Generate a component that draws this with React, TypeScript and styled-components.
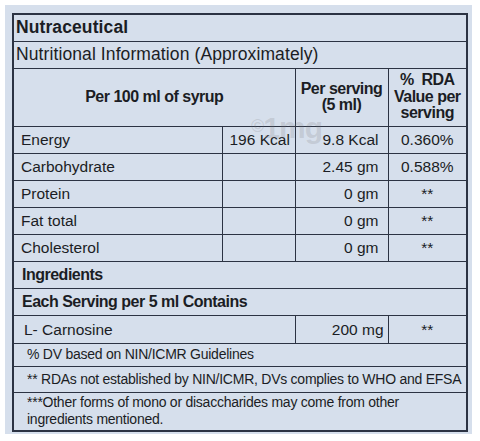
import styled, { createGlobalStyle } from "styled-components";

const GlobalStyle = createGlobalStyle`
    html, body {
        margin: 0;
        padding: 0;
        background: #ffffff;
    }
    body {
        font-family: "Liberation Sans", Arial, sans-serif;
        color: #1b1d24;
    }
`;

const nutrients = [
    { name: "Energy", per100: "196 Kcal", serving: "9.8 Kcal", rda: "0.360%" },
    { name: "Carbohydrate", per100: "", serving: "2.45 gm", rda: "0.588%" },
    { name: "Protein", per100: "", serving: "0 gm", rda: "**" },
    { name: "Fat total", per100: "", serving: "0 gm", rda: "**" },
    { name: "Cholesterol", per100: "", serving: "0 gm", rda: "**" },
];

export default function App() {
    return (
        <Page>
            <GlobalStyle />
            <Panel>
                <Table>
                    <colgroup>
                        <col style={{ width: 209 }} />
                        <col style={{ width: 73 }} />
                        <col style={{ width: 93 }} />
                        <col style={{ width: 79 }} />
                    </colgroup>
                    <tbody>
                        <Row h={27}>
                            <TitleCell colSpan={4} bold>
                                Nutraceutical
                            </TitleCell>
                        </Row>
                        <Row h={27}>
                            <TitleCell colSpan={4}>Nutritional Information (Approximately)</TitleCell>
                        </Row>
                        <Row h={58}>
                            <HeadCell colSpan={2}>Per 100 ml of syrup</HeadCell>
                            <HeadCell>
                                Per serving
                                <br />
                                (5 ml)
                            </HeadCell>
                            <HeadCell>
                                %&nbsp; RDA
                                <br />
                                Value per
                                <br />
                                serving
                            </HeadCell>
                        </Row>
                        {nutrients.map((n) => (
                            <Row h={27} key={n.name}>
                                <Cell pad={7}>{n.name}</Cell>
                                <Cell align="right" pad={7}>
                                    {n.per100}
                                </Cell>
                                <Cell align="right" pad={9}>
                                    {n.serving}
                                </Cell>
                                <Cell align="center">{n.rda}</Cell>
                            </Row>
                        ))}
                        <Row h={27}>
                            <BoldCell colSpan={4}>Ingredients</BoldCell>
                        </Row>
                        <Row h={27}>
                            <BoldCell colSpan={4}>Each Serving per 5 ml Contains</BoldCell>
                        </Row>
                        <Row h={28}>
                            <Cell colSpan={2} pad={10}>
                                L- Carnosine
                            </Cell>
                            <Cell align="right" pad={4}>
                                200 mg
                            </Cell>
                            <Cell align="center">**</Cell>
                        </Row>
                        <Row h={23}>
                            <NoteCell colSpan={4}>% DV based on NIN/ICMR Guidelines</NoteCell>
                        </Row>
                        <Row h={26}>
                            <NoteCell colSpan={4}>
                                ** RDAs not established by NIN/ICMR, DVs complies to WHO and EFSA
                            </NoteCell>
                        </Row>
                        <Row h={39}>
                            <NoteCell colSpan={4}>
                                ***Other forms of mono or disaccharides may come from other
                                <br />
                                ingredients mentioned.
                            </NoteCell>
                        </Row>
                    </tbody>
                </Table>
                <Watermark>
                    <small>©</small>1mg
                </Watermark>
            </Panel>
        </Page>
    );
}

const Page = styled.div`
    width: 480px;
    height: 441px;
    padding: 5px 0 0 5px;
    box-sizing: border-box;
`;

const Panel = styled.div`
    position: relative;
    width: 467px;
    height: 429px;
    padding: 8px 0 0 7px;
    box-sizing: border-box;
    background: #d6dfec;
`;

const Table = styled.table`
    width: 454px;
    table-layout: fixed;
    border-collapse: collapse;
    border: 2px solid #2c3343;
    font-size: 15px;
    line-height: 17px;
`;

const Row = styled.tr<{ h: number }>`
    height: ${({ h }) => h}px;
`;

const Cell = styled.td<{ align?: string; pad?: number }>`
    border: 1px solid #2c3343;
    padding: 0 ${({ pad }) => pad ?? 0}px;
    text-align: ${({ align }) => align ?? "left"};
    vertical-align: middle;
    white-space: nowrap;
    overflow: hidden;
    font-size: 15.5px;
`;

const TitleCell = styled.td<{ bold?: boolean }>`
    border: 1px solid #2c3343;
    padding: 0 2px;
    vertical-align: middle;
    white-space: nowrap;
    font-size: 17.5px;
    font-weight: ${({ bold }) => (bold ? 700 : 400)};
    letter-spacing: 0.1px;
`;

const HeadCell = styled.td`
    border: 1px solid #2c3343;
    padding: 0;
    text-align: center;
    vertical-align: middle;
    white-space: nowrap;
    font-weight: 700;
    font-size: 16px;
    line-height: 16.5px;
    letter-spacing: -0.5px;
`;

const BoldCell = styled.td`
    border: 1px solid #2c3343;
    padding: 0 8px;
    vertical-align: middle;
    white-space: nowrap;
    font-weight: 700;
    font-size: 16px;
    letter-spacing: -0.5px;
`;

const NoteCell = styled.td`
    border: 1px solid #2c3343;
    padding: 0 13px;
    vertical-align: middle;
    white-space: nowrap;
    font-size: 14px;
    line-height: 17px;
    letter-spacing: -0.25px;
`;

const Watermark = styled.div`
    position: absolute;
    left: 246px;
    top: 106px;
    font-family: "Liberation Sans", sans-serif;
    font-weight: 700;
    font-size: 30px;
    letter-spacing: -1px;
    color: rgba(120, 120, 120, 0.2);
    pointer-events: none;

    small {
        font-size: 18px;
        vertical-align: 6px;
    }
`;
